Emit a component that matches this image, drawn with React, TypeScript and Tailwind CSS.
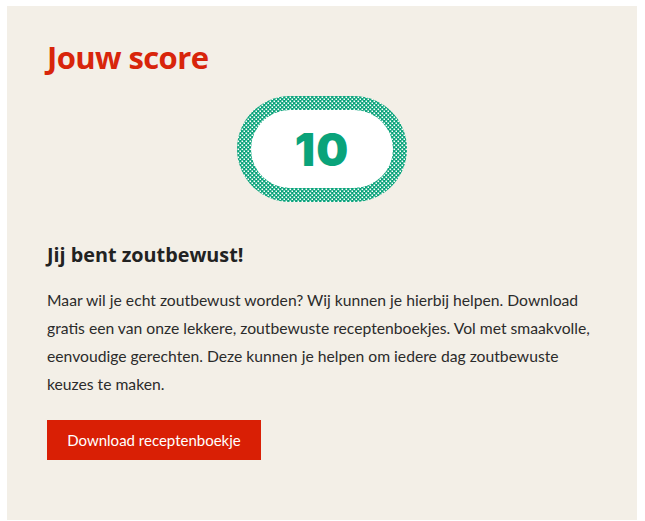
export default function App() {
  return (
    <div className="min-h-[521px] bg-white pl-[7px] pt-[6px]" style={{ fontFamily: "Lato, 'Open Sans', sans-serif" }}>
      <div className="w-[630px] bg-[#f3efe7] px-[40px] pt-[33px] pb-[60px]">
        <h1
          className="text-[31px] font-bold leading-[36px] tracking-[-0.6px] text-[#d8250b]"
          style={{ fontFamily: "'Open Sans', Lato, sans-serif" }}
        >
          Jouw score
        </h1>

        <div className="mt-[21px] flex justify-center">
          <ScoreBadge value={10} />
        </div>

        <h2
          className="mt-[39px] text-[19.8px] font-bold leading-[28px] text-[#222222]"
          style={{ fontFamily: "'Open Sans', Lato, sans-serif" }}
        >
          Jij bent zoutbewust!
        </h2>

        <p className="mt-[17px] text-[15.7px] leading-[28px] text-[#2b2b2b]">
          Maar wil je echt zoutbewust worden? Wij kunnen je hierbij helpen. Download gratis een van onze lekkere,
          zoutbewuste receptenboekjes. Vol met smaakvolle, eenvoudige gerechten. Deze kunnen je helpen om iedere dag
          zoutbewuste keuzes te maken.
        </p>

        <button className="mt-[22px] flex h-[40px] w-[214px] items-center justify-center bg-[#d91f05] text-[15px] text-white">
          Download receptenboekje
        </button>
      </div>
    </div>
  );
}

function ScoreBadge({ value }: { value: number }) {
  return (
    <div className="relative h-[106px] w-[170px]">
      <svg width="170" height="106" className="absolute inset-0">
        <defs>
          <pattern id="dots" width="4" height="4" patternUnits="userSpaceOnUse">
            <rect width="4" height="4" fill="#0aa37a" />
            <rect x="0.5" y="0.5" width="1.6" height="1.6" fill="#ffffff" />
            <rect x="2.5" y="2.5" width="1.6" height="1.6" fill="#ffffff" />
          </pattern>
        </defs>
        <rect x="0" y="0" width="170" height="106" rx="53" fill="url(#dots)" />
        <rect x="14" y="14" width="142" height="78" rx="39" fill="#ffffff" />
      </svg>
      <div
        className="absolute inset-0 flex items-center justify-center text-[45px] font-black leading-none tracking-[1px] text-[#0aa37a]"
        style={{ fontFamily: "Inter, sans-serif" }}
      >
        {value}
      </div>
    </div>
  );
}
